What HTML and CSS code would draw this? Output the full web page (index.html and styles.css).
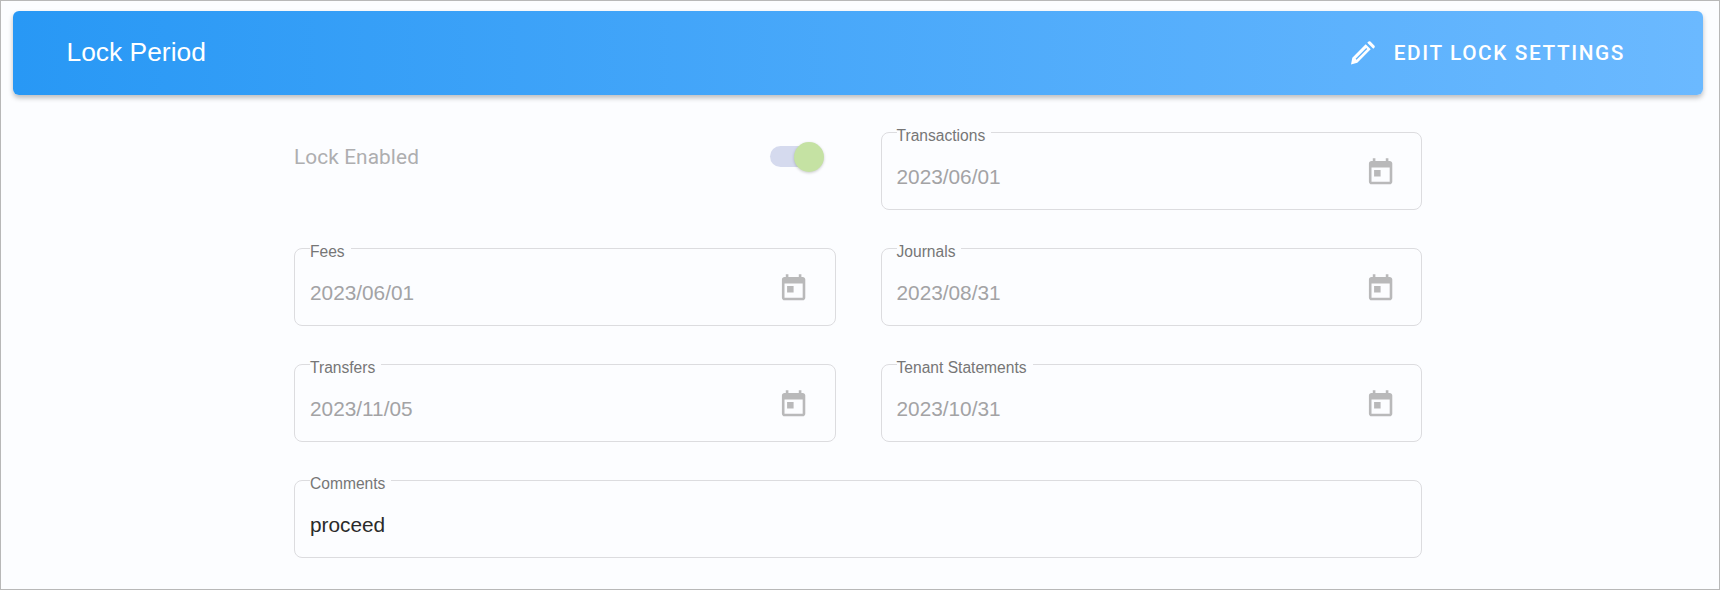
FILE: index.html
```html
<!DOCTYPE html>
<html lang="en">
<head>
<meta charset="utf-8">
<title>Lock Period</title>
<link rel="stylesheet" href="styles.css">
</head>
<body>
<main class="frame">
  <header class="banner">
    <h1 class="banner-title">Lock Period</h1>
    <button class="edit-btn" type="button">
      <svg class="edit-icon" viewBox="0 0 24 24"><path fill-rule="evenodd" d="M0 23.4 1.3 16.7 14.7 3.3 19.7 8.3 6.3 21.7ZM4.6 17.8 5.5 18.7 16.2 8 15.3 7.1Z"/><path d="M16.3 1.7 17.2.7C17.9 0 18.7 0 19.4.6L23.3 4.5C24 5.2 24 6 23.3 6.7L22.3 7.7Z"/></svg>
      <span>EDIT LOCK SETTINGS</span>
    </button>
  </header>
  <form class="form">
    <div class="toggle-row">
      <span class="toggle-label">Lock Enabled</span>
      <span class="switch"><span class="switch-track"></span><span class="switch-thumb"></span></span>
    </div>
    <fieldset class="field"><legend>Transactions</legend><span class="value">2023/06/01</span><svg class="cal" viewBox="0 0 24 24"><path d="M19 3h-1V1h-2v2H8V1H6v2H5c-1.11 0-1.99.9-1.99 2L3 19c0 1.1.89 2 2 2h14c1.1 0 2-.9 2-2V5c0-1.1-.9-2-2-2zm0 16H5V8h14v11zM7 10h5v5H7z"/></svg></fieldset>
    <fieldset class="field"><legend>Fees</legend><span class="value">2023/06/01</span><svg class="cal" viewBox="0 0 24 24"><path d="M19 3h-1V1h-2v2H8V1H6v2H5c-1.11 0-1.99.9-1.99 2L3 19c0 1.1.89 2 2 2h14c1.1 0 2-.9 2-2V5c0-1.1-.9-2-2-2zm0 16H5V8h14v11zM7 10h5v5H7z"/></svg></fieldset>
    <fieldset class="field"><legend>Journals</legend><span class="value">2023/08/31</span><svg class="cal" viewBox="0 0 24 24"><path d="M19 3h-1V1h-2v2H8V1H6v2H5c-1.11 0-1.99.9-1.99 2L3 19c0 1.1.89 2 2 2h14c1.1 0 2-.9 2-2V5c0-1.1-.9-2-2-2zm0 16H5V8h14v11zM7 10h5v5H7z"/></svg></fieldset>
    <fieldset class="field"><legend>Transfers</legend><span class="value">2023/11/05</span><svg class="cal" viewBox="0 0 24 24"><path d="M19 3h-1V1h-2v2H8V1H6v2H5c-1.11 0-1.99.9-1.99 2L3 19c0 1.1.89 2 2 2h14c1.1 0 2-.9 2-2V5c0-1.1-.9-2-2-2zm0 16H5V8h14v11zM7 10h5v5H7z"/></svg></fieldset>
    <fieldset class="field"><legend>Tenant Statements</legend><span class="value">2023/10/31</span><svg class="cal" viewBox="0 0 24 24"><path d="M19 3h-1V1h-2v2H8V1H6v2H5c-1.11 0-1.99.9-1.99 2L3 19c0 1.1.89 2 2 2h14c1.1 0 2-.9 2-2V5c0-1.1-.9-2-2-2zm0 16H5V8h14v11zM7 10h5v5H7z"/></svg></fieldset>
    <fieldset class="field field-wide"><legend>Comments</legend><span class="value value-dark">proceed</span></fieldset>
  </form>
</main>
</body>
</html>
```

FILE: styles.css
```css
* { box-sizing: border-box; }
html, body { margin: 0; height: 100%; }
body { background: #fcfdff; font-family: "Liberation Sans", Arial, sans-serif; }
.frame {
  height: 590px;
  border: 1px solid #b8b8b8;
  padding: 10px 16px 0 12px;
  overflow: hidden;
}
.banner {
  height: 84px;
  display: flex;
  align-items: center;
  justify-content: space-between;
  padding: 0 78px 0 54px;
  border-radius: 6px;
  background: linear-gradient(90deg, #2898f5, #6bb9ff);
  box-shadow: 0 3px 5px rgba(0,0,0,.25);
  color: #fff;
}
.banner-title { margin: 0 0 2px -0.5px; font-size: 26.4px; font-weight: 400; }
.edit-btn {
  display: flex;
  align-items: center;
  gap: 19px;
  padding: 0;
  border: 0;
  background: none;
  color: #fff;
  font: 500 20.8px Roboto, sans-serif;
  letter-spacing: 1.6px;
}
.edit-icon { width: 24px; height: 24px; fill: #fff; }
.form {
  display: grid;
  grid-template-columns: 1fr 1fr;
  width: 1128px;
  column-gap: 45px;
  row-gap: 26px;
  margin: 25px 0 0 281px;
}
.toggle-row {
  align-self: start;
  display: flex;
  align-items: center;
  justify-content: space-between;
  padding: 22px 12px 0 0;
}
.toggle-label { font: 400 20.8px Roboto, sans-serif; letter-spacing: .1px; color: #aeaeb0; }
.switch { position: relative; display: block; width: 54px; height: 30px; }
.switch-track {
  position: absolute; left: 0; top: 4px;
  width: 40px; height: 21px;
  border-radius: 11px;
  background: #d5daee;
}
.switch-thumb {
  position: absolute; right: 0; top: 0;
  width: 30px; height: 30px;
  border-radius: 50%;
  background: #c5e2a3;
  box-shadow: 0 1px 3px rgba(0,0,0,.2);
}
.field {
  position: relative;
  min-width: 0;
  height: 90px;
  margin: 0;
  padding: 0 15px;
  display: flex;
  border: 1px solid #dcdcdf;
  border-radius: 8px;
}
.field legend {
  padding: 7px 6px 0 0;
  margin-left: 0;
  font-size: 15.6px;
  line-height: 18px;
  color: #767676;
}
.field-wide { grid-column: 1 / -1; }
.value { font-size: 20.8px; line-height: 24px; color: #a3a3a5; padding-top: 20px; display: block; }
.value-dark { color: #2a2a2a; }
.cal { position: absolute; right: 25px; top: 12px; width: 31.2px; height: 31.2px; fill: #b9b9ba; }
```
